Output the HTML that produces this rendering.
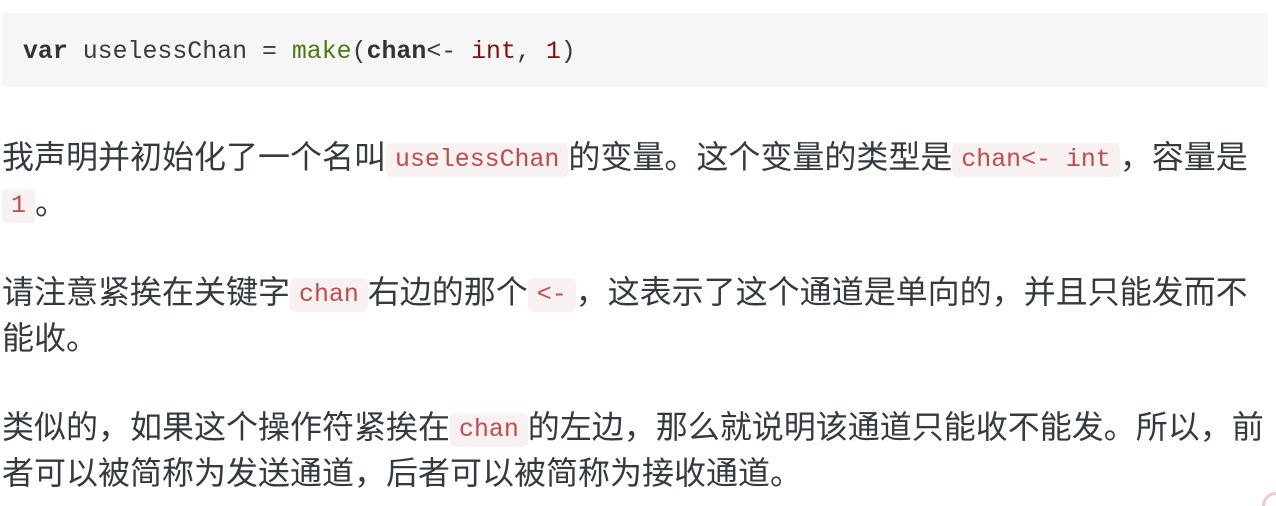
<!DOCTYPE html>
<html><head><meta charset="utf-8"><style>
html,body{margin:0;padding:0;background:#fff;width:1276px;height:506px;overflow:hidden;position:relative}
body{font-family:"Liberation Sans","Noto Sans CJK SC",sans-serif;color:#353a40}
.pre{position:absolute;left:2px;top:13px;width:1266px;height:74px;background:#f6f6f6}
.pre div{position:absolute;left:21px;top:24px;font-family:"Liberation Mono","DejaVu Sans Mono",monospace;font-size:24.9px;line-height:30px;color:#3a3a3a;white-space:pre}
.k{font-weight:bold;color:#333}
.f{color:#4a7a12}
.t{color:#7f1209}
.l{position:absolute;left:2px;font-size:32px;line-height:46px;white-space:nowrap}
code{font-family:"Liberation Mono","DejaVu Sans Mono",monospace;font-size:24.9px;color:#c24b4b;background:#f8f1f1;border-radius:5px;padding:3px 9px;vertical-align:2px}
.dot{position:absolute;right:-14px;bottom:-14px;width:22px;height:22px;border-radius:50%;border:3px solid #f1c7d2}
</style></head><body>
<div class="pre"><div><span class="k">var</span> uselessChan = <span class="f">make</span>(<span class="k">chan</span>&lt;- <span class="t">int</span>, <span class="t">1</span>)</div></div>
<div class="l" style="top:134px">我声明并初始化了一个名叫<code>uselessChan</code>的变量。这个变量的类型是<code>chan&lt;- int</code>，容量是</div>
<div class="l" style="top:180px"><code>1</code>。</div>
<div class="l" style="top:269px">请注意紧挨在关键字<code>chan</code>右边的那个<code>&lt;-</code>，这表示了这个通道是单向的，并且只能发而不</div>
<div class="l" style="top:315px">能收。</div>
<div class="l" style="top:404px">类似的，如果这个操作符紧挨在<code>chan</code>的左边，那么就说明该通道只能收不能发。所以，前</div>
<div class="l" style="top:450px">者可以被简称为发送通道，后者可以被简称为接收通道。</div>
<div class="dot"></div>
</body></html>
